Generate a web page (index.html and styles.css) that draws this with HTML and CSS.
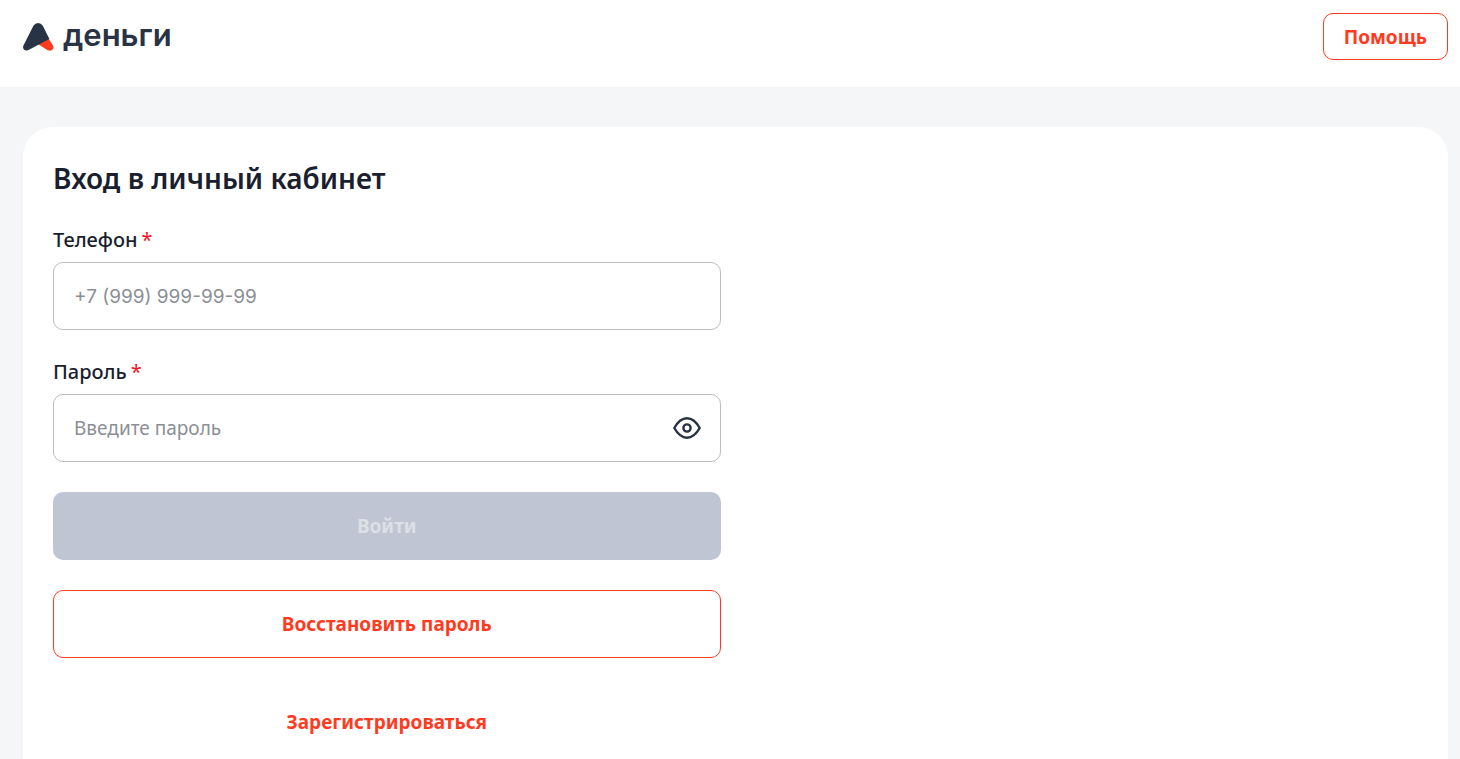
FILE: index.html
```
<!DOCTYPE html>
<html lang="ru">

<head>
  <meta charset="UTF-8">
  <meta name="viewport" content="width=device-width, initial-scale=1.0">
  <title>Вход в личный кабинет</title>
  <link rel="stylesheet" href="styles.css">
</head>

<body>
  <header class="header">
    <a class="logo" href="#">
      <svg class="logo-icon" viewBox="0 0 31 28" aria-hidden="true">
        <path fill="#ff3b1f" d="M14 20.6 L24 13 L29.7 22 Q31.5 25.3 29 27.1 Q27 28.4 24.3 26.9 Z" />
        <path fill="#283345" d="M10.4 2.7 Q12.2 0 15.1 0 Q18 0 19.8 2.7 L26.4 15.9 L5.4 27 Q2.8 28.4 1 26.6 Q-.7 24.9 .6 22.2 Z" />
      </svg>
      <span class="logo-text">деньги</span>
    </a>
    <a class="btn btn-outline btn-help" href="#">Помощь</a>
  </header>

  <main class="card">
    <h1 class="title">Вход в личный кабинет</h1>
    <div class="row">
      <form class="form">
        <div class="field">
          <label class="label" for="phone">Телефон <span class="required">*</span></label>
          <input class="input input-phone" type="tel" id="phone" placeholder="+7 (999) 999-99-99">
        </div>
        <div class="field">
          <label class="label" for="password">Пароль <span class="required">*</span></label>
          <div class="password">
            <input class="input" type="password" id="password" placeholder="Введите пароль">
            <button class="eye" type="button" aria-label="Показать пароль">
              <svg viewBox="0 0 28 22" fill="none" stroke="#283345" stroke-width="2.4">
                <path stroke-linejoin="round" d="M1.3 11 C5 4.5 9 1.3 14 1.3 S23 4.5 26.7 11 C23 17.5 19 20.7 14 20.7 S5 17.5 1.3 11 Z" />
                <circle cx="14" cy="11" r="3.6" />
              </svg>
            </button>
          </div>
        </div>
        <button class="btn btn-submit" type="submit" disabled>Войти</button>
        <button class="btn btn-outline" type="button">Восстановить пароль</button>
        <a class="btn" href="#">Зарегистрироваться</a>
      </form>
    </div>
  </main>
</body>

</html>
```
FILE: styles.css
```
* {
  margin: 0;
  padding: 0;
  box-sizing: border-box;
}

:root {
  --accent: #ff3b1f;
  --dark: #1a1f30;
  --page-bg: #f5f6f8;
  --radius: 10px;
  --control-height: 68px;
  --gap: 30px;
}

body {
  background-color: var(--page-bg);
  color: var(--dark);
  font-family: "Noto Sans", "Open Sans", sans-serif;
  font-size: 19px;
  line-height: 24px;
}

.header {
  display: flex;
  justify-content: space-between;
  align-items: flex-start;
  height: 87px;
  padding: 13px 12px 0 23px;
  background-color: #fff;
}

.logo {
  display: flex;
  align-items: center;
  gap: 9px;
  height: 47px;
  color: #283345;
  text-decoration: none;
}

.logo-icon {
  width: 31px;
  height: 28px;
}

.logo-text {
  padding-bottom: 4px;
  font-family: Inter, sans-serif;
  font-size: 31px;
  font-weight: 600;
}

.card {
  margin: 40px 12px 0 23px;
  padding: var(--gap);
  border-radius: 30px;
  background-color: #fff;
}

.title {
  margin-bottom: 28px;
  font-size: 28px;
  font-weight: 600;
  line-height: 43px;
}

.row {
  display: grid;
  grid-template-columns: 1fr 1fr;
  gap: var(--gap);
}

.form {
  display: flex;
  flex-direction: column;
  gap: var(--gap);
}

.label {
  display: flex;
  gap: 4px;
  margin-bottom: 10px;
  font-size: 20px;
  font-weight: 500;
}

.required {
  color: #f5121d;
  font-weight: 400;
}

.input {
  display: block;
  width: 100%;
  height: var(--control-height);
  padding: 0 20px;
  border: 1px solid #bdbdbd;
  border-radius: var(--radius);
  background-color: #fff;
  color: inherit;
  font: inherit;
}

/* у Inter цифры шире */
.input-phone {
  font-family: Inter, sans-serif;
}

.input::placeholder {
  color: #8b8f96;
}

.password {
  position: relative;
}

/* кнопка поверх поля пароля */
.eye {
  position: absolute;
  top: 0;
  right: 20px;
  display: flex;
  align-items: center;
  height: 100%;
  border: 0;
  background: none;
  cursor: pointer;
}

.eye svg {
  width: 28px;
  height: 22px;
}

.btn {
  display: flex;
  justify-content: center;
  align-items: center;
  height: var(--control-height);
  padding: 0 20px;
  border: 1px solid transparent;
  border-radius: var(--radius);
  background: none;
  color: var(--accent);
  font: inherit;
  font-weight: 700;
  text-decoration: none;
  cursor: pointer;
}

.btn-outline {
  border-color: var(--accent);
}

.btn-help {
  height: 47px;
}

.btn-submit {
  background-color: #bfc5d2;
  color: #dce0e7;
  cursor: default;
}
```
